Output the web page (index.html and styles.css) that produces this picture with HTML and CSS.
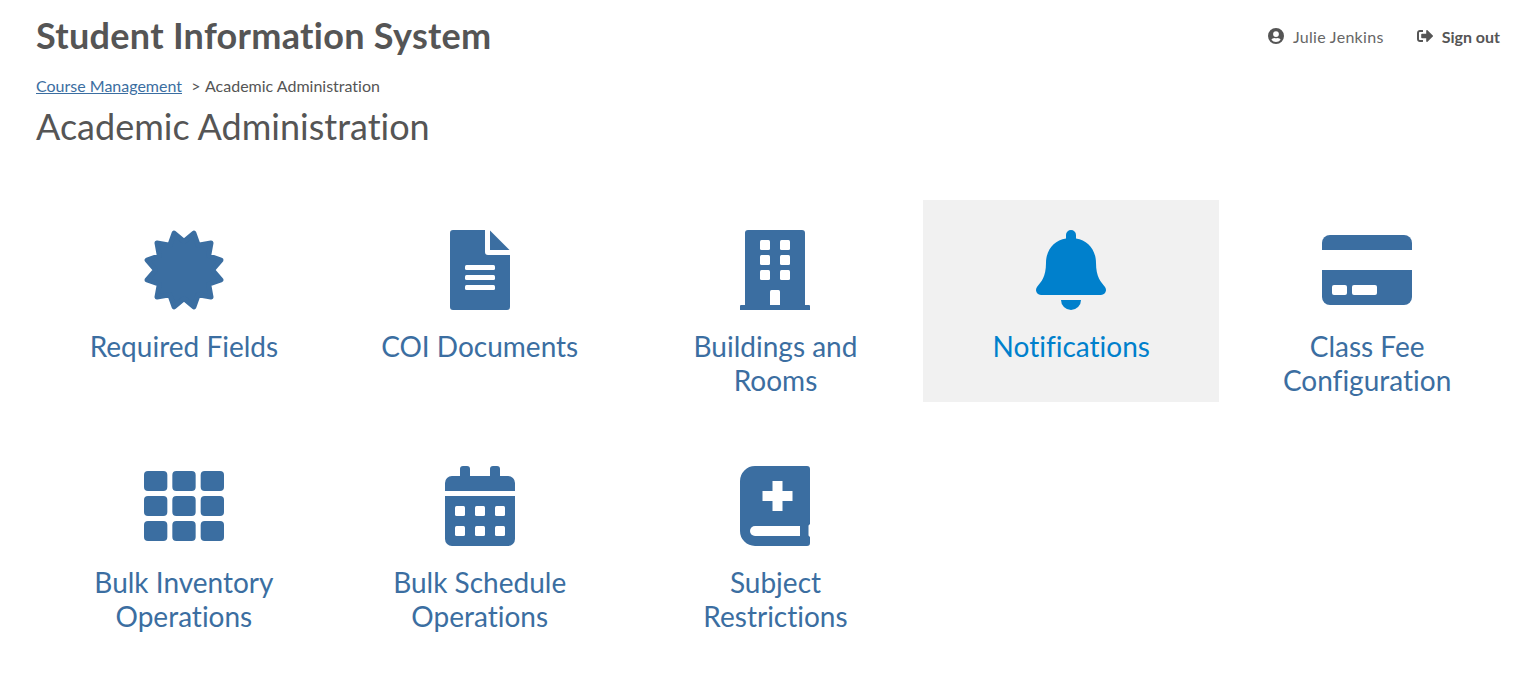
FILE: index.html
```html
<!DOCTYPE html>
<html lang="en">
<head>
    <meta charset="UTF-8">
    <title>Academic Administration</title>
    <link rel="stylesheet" href="styles.css">
</head>
<body>
    <header class="top-bar">
        <div class="app-name">Student Information System</div>
        <div class="user-nav">
            <span class="user-item">
                <svg class="nav-icon" viewBox="0 0 16 16"><path fill-rule="evenodd" d="M8 0a8 8 0 1 1 0 16A8 8 0 0 1 8 0zm0 3.200a2.900 2.900 0 1 0 0 5.800 2.900 2.900 0 0 0 0-5.800zM8 14a6 6 0 0 0 4.600-2.200c-.6-1.100-1.700-1.800-3-1.800-.5 0-.9.300-1.600.3s-1.100-.3-1.600-.3c-1.300 0-2.400.7-3 1.800A6 6 0 0 0 8 14z"/></svg>
                Julie Jenkins
            </span>
            <a class="sign-out" href="#">
                <svg class="nav-icon" viewBox="0 0 16 16"><path d="M15.800 8.500l-5.300 5.200c-.5.500-1.300.1-1.300-.5v-3H5c-.4 0-.8-.3-.8-.8V6.600c0-.4.300-.8.800-.8h4.200v-3c0-.7.800-1 1.300-.5l5.300 5.200c.3.300.3.700 0 1zM6 13.600v-1.300c0-.2-.1-.3-.3-.3H3c-.6 0-1-.4-1-1V5c0-.6.400-1 1-1h2.700c.2 0 .3-.1.300-.3V2.400c0-.2-.1-.3-.3-.3H3C1.300 2.100 0 3.400 0 5v6c0 1.700 1.300 3 3 3h2.700c.2 0 .3-.2.300-.4z"/></svg>
                Sign out
            </a>
        </div>
    </header>

    <nav class="breadcrumb">
        <a href="#">Course Management</a>
        <span class="crumb-sep">&gt;</span>
        <span>Academic Administration</span>
    </nav>
    <h1 class="page-title">Academic Administration</h1>

    <main class="tile-grid">
        <a class="tile" href="#">
            <span class="tile-icon">
                <svg width="80" height="80" viewBox="0 0 80 80"><polygon class="round-shape" points="40,11.500 49.890,3.100 54.250,15.320 67,13 64.680,25.750 76.900,30.110 68.500,40 76.900,49.890 64.680,54.250 67,67 54.250,64.680 49.890,76.900 40,68.500 30.110,76.900 25.750,64.680 13,67 15.320,54.250 3.100,49.890 11.500,40 3.100,30.110 15.320,25.750 13,13 25.750,15.320 30.110,3.100"/></svg>
            </span>
            <span class="tile-label">Required Fields</span>
        </a>
        <a class="tile" href="#">
            <span class="tile-icon">
                <svg width="60" height="80" viewBox="0 0 60 80">
                    <path d="M3 0H35V22a3 3 0 0 0 3 3H60V77a3 3 0 0 1-3 3H3a3 3 0 0 1-3-3V3a3 3 0 0 1 3-3z"/>
                    <path d="M40 0.500L59.500 20H40z"/>
                    <rect class="cut" x="15" y="35" width="30" height="5" rx="1.500"/>
                    <rect class="cut" x="15" y="45" width="30" height="5" rx="1.500"/>
                    <rect class="cut" x="15" y="55" width="30" height="5" rx="1.500"/>
                </svg>
            </span>
            <span class="tile-label">COI Documents</span>
        </a>
        <a class="tile" href="#">
            <span class="tile-icon">
                <svg width="70" height="80" viewBox="0 0 70 80">
                    <path d="M8 0H62a3 3 0 0 1 3 3V75H69a1 1 0 0 1 1 1V80H0V76a1 1 0 0 1 1-1H5V3a3 3 0 0 1 3-3z"/>
                    <rect class="cut" x="20" y="10" width="10" height="10" rx="1.500"/>
                    <rect class="cut" x="40" y="10" width="10" height="10" rx="1.500"/>
                    <rect class="cut" x="20" y="25" width="10" height="10" rx="1.500"/>
                    <rect class="cut" x="40" y="25" width="10" height="10" rx="1.500"/>
                    <rect class="cut" x="20" y="40" width="10" height="10" rx="1.500"/>
                    <rect class="cut" x="40" y="40" width="10" height="10" rx="1.500"/>
                    <path class="cut" d="M31.500 60H38.500a1.500 1.500 0 0 1 1.500 1.500V75H30V61.500a1.500 1.500 0 0 1 1.500-1.500z"/>
                </svg>
            </span>
            <span class="tile-label">Buildings and Rooms</span>
        </a>
        <a class="tile tile-active" href="#">
            <span class="tile-icon">
                <svg width="70" height="80" viewBox="0 0 70 80">
                    <path d="M35 0a5 5 0 0 1 5 5V8.500C52 10.500 60 20 60 33C60 47 65 52 69 57C71.500 60.500 69 65 65 65H5C1 65-1.500 60.500 1 57C5 52 10 47 10 33C10 20 18 10.500 30 8.500V5a5 5 0 0 1 5-5z"/>
                    <path d="M25 70H45a10 10 0 0 1-20 0z"/>
                </svg>
            </span>
            <span class="tile-label">Notifications</span>
        </a>
        <a class="tile" href="#">
            <span class="tile-icon">
                <svg width="90" height="70" viewBox="0 0 90 70">
                    <path d="M8 0H82a8 8 0 0 1 8 8V15H0V8a8 8 0 0 1 8-8z"/>
                    <path d="M0 35H90V62a8 8 0 0 1-8 8H8a8 8 0 0 1-8-8z"/>
                    <rect class="cut" x="10" y="50" width="15" height="10" rx="2"/>
                    <rect class="cut" x="30" y="50" width="25" height="10" rx="2"/>
                </svg>
            </span>
            <span class="tile-label">Class Fee Configuration</span>
        </a>
        <a class="tile" href="#">
            <span class="tile-icon">
                <svg width="80" height="70" viewBox="0 0 80 70">
                    <rect width="23.330" height="20" rx="4"/>
                    <rect x="28.330" width="23.330" height="20" rx="4"/>
                    <rect x="56.670" width="23.330" height="20" rx="4"/>
                    <rect y="25" width="23.330" height="20" rx="4"/>
                    <rect x="28.330" y="25" width="23.330" height="20" rx="4"/>
                    <rect x="56.670" y="25" width="23.330" height="20" rx="4"/>
                    <rect y="50" width="23.330" height="20" rx="4"/>
                    <rect x="28.330" y="50" width="23.330" height="20" rx="4"/>
                    <rect x="56.670" y="50" width="23.330" height="20" rx="4"/>
                </svg>
            </span>
            <span class="tile-label">Bulk Inventory Operations</span>
        </a>
        <a class="tile" href="#">
            <span class="tile-icon">
                <svg width="70" height="80" viewBox="0 0 70 80">
                    <path d="M7 10H15V3a3 3 0 0 1 3-3H22a3 3 0 0 1 3 3V10H45V3a3 3 0 0 1 3-3H52a3 3 0 0 1 3 3V10H63a7 7 0 0 1 7 7V25H0V17a7 7 0 0 1 7-7z"/>
                    <path d="M0 30H70V73a7 7 0 0 1-7 7H7a7 7 0 0 1-7-7z"/>
                    <rect class="cut" x="10" y="40" width="10" height="10" rx="1.500"/>
                    <rect class="cut" x="30" y="40" width="10" height="10" rx="1.500"/>
                    <rect class="cut" x="50" y="40" width="10" height="10" rx="1.500"/>
                    <rect class="cut" x="10" y="60" width="10" height="10" rx="1.500"/>
                    <rect class="cut" x="30" y="60" width="10" height="10" rx="1.500"/>
                    <rect class="cut" x="50" y="60" width="10" height="10" rx="1.500"/>
                </svg>
            </span>
            <span class="tile-label">Bulk Schedule Operations</span>
        </a>
        <a class="tile" href="#">
            <span class="tile-icon">
                <svg width="70" height="80" viewBox="0 0 70 80">
                    <path d="M15 0H67a3 3 0 0 1 3 3V58L68.500 59.500V69.500L70 71V77a3 3 0 0 1-3 3H15A15 15 0 0 1 0 65V15A15 15 0 0 1 15 0z"/>
                    <path class="cut" d="M22.500 25H32.500V15H42.500V25H52.500V35H42.500V45H32.500V35H22.500z"/>
                    <path class="cut" d="M15 60H60V70H15a5 5 0 0 1 0-10z"/>
                </svg>
            </span>
            <span class="tile-label">Subject Restrictions</span>
        </a>
    </main>
</body>
</html>
```

FILE: styles.css
```css
* {
    box-sizing: border-box;
}

body {
    margin: 0;
    padding: 0 17px 0 36px;
    background: #fff;
    color: #555;
    font-family: Lato, "Open Sans", sans-serif;
    font-variant-ligatures: none;
}

a {
    color: #3b6ea1;
}

.top-bar {
    display: flex;
    justify-content: space-between;
    align-items: center;
    height: 72px;
}

.app-name {
    margin-top: -3px;
    font-size: 36px;
    font-weight: 700;
    letter-spacing: 0.3px;
    color: #555;
}

.user-nav {
    display: flex;
    align-items: center;
    gap: 33px;
    font-size: 16px;
    color: #666;
}

.user-item, .sign-out {
    display: flex;
    align-items: center;
    gap: 9px;
}

.user-item {
    letter-spacing: 0.3px;
}

.sign-out {
    color: #555;
    font-size: 16px;
    font-weight: 700;
    text-decoration: none;
}

.nav-icon {
    width: 16px;
    height: 16px;
    fill: #555;
}

.breadcrumb {
    height: 28px;
    line-height: 28px;
    font-size: 16px;
    color: #555;
}

.crumb-sep {
    margin: 0 1px 0 5px;
}

.page-title {
    margin: -1px 0 0;
    height: 54px;
    line-height: 54px;
    font-size: 36px;
    font-weight: 400;
    color: #555;
}

.tile-grid {
    display: grid;
    grid-template-columns: repeat(5, 1fr);
    grid-auto-rows: 202px;
    row-gap: 34px;
    margin-top: 47px;
    width: 1479px;
}

.tile {
    display: flex;
    flex-direction: column;
    align-items: center;
    padding: 30px 40px 0;
    color: #3b6ea1;
    text-align: center;
    text-decoration: none;
}

.tile svg {
    display: block;
    fill: #3b6ea1;
}

.tile svg .cut {
    fill: #fff;
}

.tile svg .round-shape {
    stroke: #3b6ea1;
    stroke-width: 5;
    stroke-linejoin: round;
}

.tile-icon {
    display: flex;
    align-items: center;
    justify-content: center;
    height: 80px;
    margin-bottom: 19px;
}

.tile-label {
    font-size: 28px;
    line-height: 34px;
}

.tile-active {
    background: #f1f1f1;
    color: #0080cc;
}

.tile-active svg {
    fill: #0080cc;
}
```
